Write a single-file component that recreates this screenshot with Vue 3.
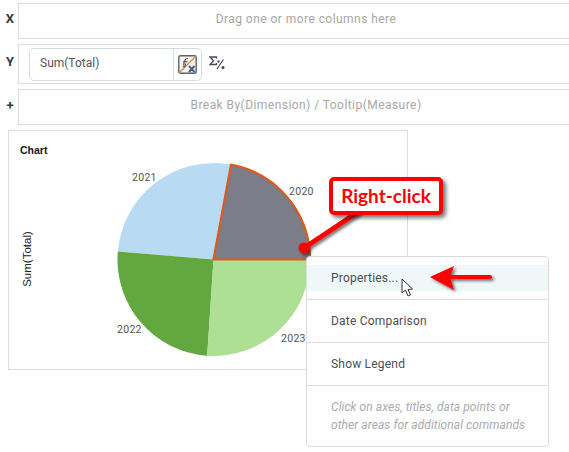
<script setup>
const slices = [
  { name: "2021", color: "#b9daf3", d: "M213.5 259.5 L231 164.600 A96.500 96.500 0 0 0 117.800 251.500 Z" },
  { name: "2022", color: "#62a73f", d: "M213.5 259.5 L117.800 251.500 A96.500 96.500 0 0 0 207.200 355.800 Z" },
  { name: "2023", color: "#addf95", d: "M213.5 259.5 L207.200 355.800 A96.500 96.500 0 0 0 310 259.500 Z" },
];
const labels = [
  { text: "2020", x: 289, y: 195 },
  { text: "2021", x: 132, y: 181 },
  { text: "2022", x: 117, y: 333 },
  { text: "2023", x: 281, y: 342 },
];
</script>

<template>
  <div class="page">
    <div class="shelf-row">
      <span class="shelf-key">X</span>
      <div class="shelf shelf-empty">Drag one or more columns here</div>
    </div>
    <div class="shelf-row shelf-row-y">
      <span class="shelf-key">Y</span>
      <div class="shelf shelf-filled">
        <div class="pill">
          <span class="pill-text">Sum(Total)</span>
          <span class="pill-btn">
            <svg width="19" height="19" viewBox="0 0 19 19">
              <rect x="0.8" y="0.8" width="17.4" height="17.4" rx="1.5" fill="#f7f1e8" stroke="#5d6470" stroke-width="1.4" />
              <path d="M1 18 L18 1" stroke="#c98a4a" stroke-width="1.1" />
              <path d="M5.500 10.500 C6.500 5.500 7 3.500 10 3.500 M5 6.800 H9.500 M7.600 8.500 C7.400 11 6.500 12 4.800 12" stroke="#454c58" stroke-width="1.1" fill="none" />
              <path d="M11 11 L16.500 17 M16.500 11 L11 17" stroke="#3f5f8a" stroke-width="1.9" />
            </svg>
          </span>
        </div>
        <svg class="sigma" width="16" height="14" viewBox="0 0 16 14">
          <path d="M7.500 2.500 V1 H1 L4.500 4.700 L1 8.500 H7.500 V7" fill="none" stroke="#454c58" stroke-width="1.300" />
          <path d="M8 13 L14.500 3.500" stroke="#454c58" stroke-width="1.200" />
          <circle cx="9.500" cy="5.500" r="1.300" fill="#5d6470" />
          <circle cx="14" cy="11.500" r="1.500" fill="#3f4652" />
        </svg>
      </div>
    </div>
    <div class="shelf-row">
      <span class="shelf-key">+</span>
      <div class="shelf shelf-empty">Break By(Dimension) / Tooltip(Measure)</div>
    </div>

    <div class="chart-card">
      <div class="chart-title">Chart</div>
      <div class="axis-title">Sum(Total)</div>
    </div>

    <svg class="chart-svg" width="569" height="452" viewBox="0 0 569 452">
      <path v-for="s in slices" :key="s.name" :d="s.d" :fill="s.color" />
      <path d="M213.5 259.5 L231 164.600 A96.500 96.500 0 0 1 310 259.500 Z" fill="#7b7d89" stroke="#dd5a1e" stroke-width="2.200" stroke-linejoin="round" />
      <text v-for="l in labels" :key="l.text" :x="l.x" :y="l.y" class="pie-label">{{ l.text }}</text>
    </svg>

    <div class="menu">
      <div class="menu-item menu-item-active"><span>Properties...</span></div>
      <div class="menu-item">Date Comparison</div>
      <div class="menu-item">Show Legend</div>
      <div class="menu-hint">Click on axes, titles, data points or other areas for additional commands</div>
    </div>

    <svg class="notes-svg" width="569" height="452" viewBox="0 0 569 452">
      <defs>
        <filter id="soft" x="-20%" y="-20%" width="150%" height="150%">
          <feDropShadow dx="2" dy="2" stdDeviation="1.6" flood-color="#000" flood-opacity="0.55" />
        </filter>
      </defs>
      <g filter="url(#soft)">
        <path d="M304 248 L358 212" stroke="#f00" stroke-width="5" stroke-linecap="round" />
        <circle cx="304" cy="248" r="5.5" fill="#f00" />
        <path d="M490 277 H447" stroke="#f00" stroke-width="4" stroke-linecap="round" />
        <path d="M430 277 L454 266 L450 277 L454 290 Z" fill="#f00" />
      </g>
      <path d="M402 279 V293 L405.500 290 L408 296 L410.500 295 L408 289.500 L412.500 289 Z" fill="#fff" stroke="#333" stroke-width="1" />
    </svg>

    <div class="callout">Right-click</div>
  </div>
</template>

<style scoped>
.page {
  position: relative;
  width: 569px;
  height: 452px;
  overflow: hidden;
  background: #fff;
  font-family: Roboto, "Liberation Sans", sans-serif;
  padding-top: 3px;
  box-sizing: border-box;
}

.shelf-row {
  display: flex;
  align-items: flex-start;
  width: 593px;
  height: 36px;
  margin-bottom: 5px;
}

.shelf-row-y {
  height: 40px;
}

.shelf-key {
  width: 18px;
  flex: none;
  padding-left: 2px;
  padding-top: 8px;
  box-sizing: border-box;
  text-align: center;
  font-size: 13px;
  font-weight: 700;
  color: #333a45;
  line-height: 16px;
}

.shelf-row-y .shelf-key {
  padding-top: 10px;
}

.shelf-row:nth-child(3) .shelf-key {
  padding-top: 9px;
}

.shelf {
  flex: 1;
  height: 100%;
  box-sizing: border-box;
  border: 1px solid #dcdcdc;
  border-right: 0;
}

.shelf-empty {
  padding-top: 8px;
  text-align: center;
  font-size: 12px;
  line-height: 15px;
  letter-spacing: 0.45px;
  color: #a7a7a7;
}

.shelf-filled {
  display: flex;
  align-items: center;
  padding-left: 10px;
}

.pill {
  display: flex;
  align-items: stretch;
  width: 173px;
  height: 33px;
  box-sizing: border-box;
  border: 1px solid #d5dcdf;
  border-radius: 5px;
}

.pill-text {
  flex: 1;
  padding-left: 10px;
  font-size: 12px;
  line-height: 29px;
  color: #555;
}

.pill-btn {
  width: 27px;
  display: flex;
  align-items: center;
  justify-content: center;
  border-left: 1px solid #d5dcdf;
}

.sigma {
  margin-left: 7px;
  margin-top: -2px;
}

.chart-card {
  position: relative;
  margin-left: 8px;
  width: 400px;
  height: 240px;
  box-sizing: border-box;
  border: 1px solid #dcdcdc;
}

.chart-title {
  padding: 13px 0 0 11px;
  font-family: "Liberation Sans", sans-serif;
  font-size: 10.500px;
  font-weight: 700;
  line-height: 12px;
  color: #111827;
}

.axis-title {
  position: absolute;
  left: 12px;
  top: 128px;
  transform: translate(-50%, -50%) rotate(-90deg) translateY(50%);
  white-space: nowrap;
  font-family: "Liberation Sans", sans-serif;
  font-size: 11.500px;
  color: #222;
}

.chart-svg,
.notes-svg {
  position: absolute;
  left: 0;
  top: 0;
  pointer-events: none;
}

.pie-label {
  font-family: Roboto, "Liberation Sans", sans-serif;
  font-size: 10.500px;
  letter-spacing: 0.3px;
  fill: #555;
}

.menu {
  position: absolute;
  left: 306px;
  top: 256px;
  width: 243px;
  height: 191px;
  box-sizing: border-box;
  padding-top: 8px;
  background: #fff;
  border: 1px solid #dcdcdc;
  border-radius: 4px;
  font-size: 12px;
  color: #4a4f57;
}

.menu-item {
  height: 43px;
  box-sizing: border-box;
  padding: 14px 0 0 24px;
  line-height: 15px;
  letter-spacing: 0.2px;
  border-bottom: 1px solid #dcdcdc;
}

.menu-item-active {
  height: 35px;
  padding-top: 6px;
  position: relative;
}

.menu-item-active::before {
  content: "";
  position: absolute;
  left: 0;
  right: 0;
  top: 0;
  height: 26px;
  background: #eff7f9;
}

.menu-item-active span {
  position: relative;
}

.menu-hint {
  padding: 12px 18px 0 24px;
  font-style: italic;
  line-height: 18px;
  letter-spacing: 0.07px;
  color: #a9abae;
}

.callout {
  position: absolute;
  left: 329px;
  top: 177px;
  width: 114px;
  height: 38px;
  box-sizing: border-box;
  border: 4px solid #f00;
  border-radius: 5px;
  background: #fff;
  box-shadow: 3px 3px 4px rgba(0, 0, 0, 0.55);
  text-align: center;
  font-family: Lato, "Liberation Sans", sans-serif;
  font-size: 19px;
  font-weight: 700;
  line-height: 29px;
  color: #f00;
}
</style>

<style>
html,
body {
  margin: 0;
  background: #fff;
}
</style>
